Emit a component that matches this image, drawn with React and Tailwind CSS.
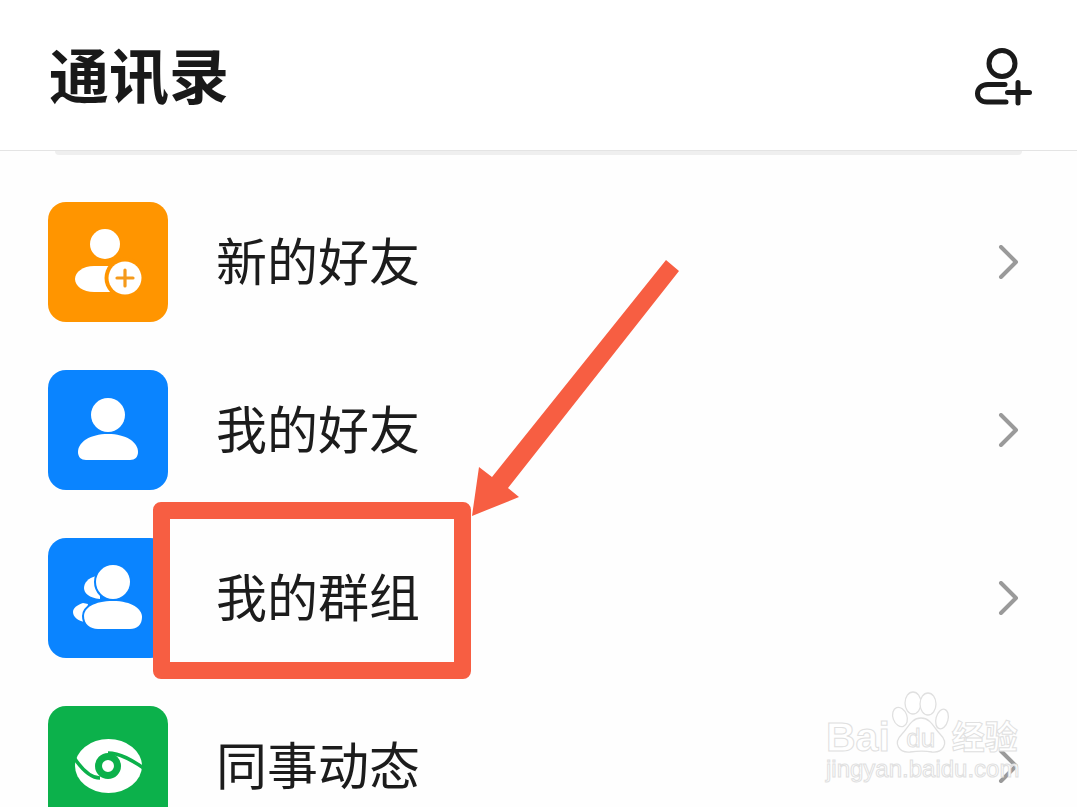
const rows = [
  { label: "新的好友", bg: "bg-[#ff9500]", icon: <NewFriend /> },
  { label: "我的好友", bg: "bg-[#0a84ff]", icon: <Friend /> },
  { label: "我的群组", bg: "bg-[#0a84ff]", icon: <Group /> },
  { label: "同事动态", bg: "bg-[#0cb14b]", icon: <Eye /> },
];

function NewFriend() {
  return (
    <svg viewBox="0 0 120 120" className="w-[120px] h-[120px]">
      <circle cx="57" cy="42" r="15" fill="#fff" />
      <path d="M46 64H76V90H46C35 90 27 84 27 77C27 70 35 64 46 64Z" fill="#fff" />
      <circle cx="77" cy="76" r="20.5" fill="#ff9500" />
      <circle cx="77" cy="76" r="16.5" fill="#fff" />
      <path d="M69 76H85M77 68V84" stroke="#f59a1b" strokeWidth="3.2" strokeLinecap="round" />
    </svg>
  );
}
function Friend() {
  return (
    <svg viewBox="0 0 120 120" className="w-[120px] h-[120px]">
      <circle cx="60" cy="45" r="17" fill="#fff" />
      <path d="M60 64C78 64 90 72 90 82C90 87 87 90 82 90H38C33 90 30 87 30 82C30 72 42 64 60 64Z" fill="#fff" />
    </svg>
  );
}
function Group() {
  return (
    <svg viewBox="0 0 120 120" className="w-[120px] h-[120px]">
      <path d="M48 38C40 40 36 45 36 50C36 55 41 60 52 61L52 38Z" fill="#fff" />
      <path d="M35 65C29 67 25 70 25 74C25 79 30 83 37 84L40 66Z" fill="#fff" />
      <circle cx="65" cy="44" r="17" fill="#fff" stroke="#0a84ff" strokeWidth="4" paintOrder="stroke" />
      <path d="M65 63C84 63 94 71 94 79C94 87 89 91 82 91H50C42 91 36 86 36 78C36 70 46 63 65 63Z" fill="#fff" stroke="#0a84ff" strokeWidth="4" paintOrder="stroke" />
    </svg>
  );
}
function Eye() {
  return (
    <svg viewBox="0 0 120 120" className="w-[120px] h-[120px]">
      <ellipse cx="60.5" cy="60" rx="33.5" ry="27" fill="#fff" />
      <path d="M25 50C34 64 44 72 52 72M60 47C72 47 84 54 97 63" fill="none" stroke="#0cb14b" strokeWidth="3.5" />
      <circle cx="60" cy="60" r="9.5" fill="#fff" stroke="#0cb14b" strokeWidth="7" />
    </svg>
  );
}
function Chevron() {
  return (
    <svg viewBox="0 0 24 34" className="w-6 h-[34px] translate-x-[2px]">
      <path d="M3 2L18 17L3 32" fill="none" stroke="#9a9a9a" strokeWidth="4" strokeLinecap="round" strokeLinejoin="round" />
    </svg>
  );
}

const latin = { fontFamily: '"Liberation Sans", sans-serif' };

export default function App() {
  const font = { fontFamily: '"Noto Sans CJK SC", "Noto Sans", sans-serif' };
  return (
    <div style={font} className="relative w-[1077px] h-[807px] overflow-hidden bg-[#fefefe]">
      <header className="h-[151px] border-b border-[#e4e4e4] flex items-center justify-between pl-[49px] pr-[44px] pb-[6px] bg-white">
        <h1 className="text-[60px] leading-none font-bold text-[#191919] mt-[2px]">通讯录</h1>
        <svg viewBox="0 0 60 60" className="w-[60px] h-[60px] mt-[10px]">
          <circle cx="29" cy="16.5" r="13" fill="none" stroke="#1a1a1a" strokeWidth="5" />
          <path d="M32 37.5H15C8 37.5 4.5 42 4.5 46.5C4.5 51 8 55 14 55H33" fill="none" stroke="#1a1a1a" strokeWidth="5" strokeLinecap="round" />
          <path d="M34.5 45.5H56.5M45 35.5V56" fill="none" stroke="#1a1a1a" strokeWidth="5" strokeLinecap="round" />
        </svg>
      </header>
      <div className="mx-[55px] h-1 rounded-b-xl bg-[#efefef]" />
      <ul className="flex flex-col gap-12 pl-[48px] pr-[57px] pt-[47px]">
        {rows.map((r) => (
          <li key={r.label} className="flex items-center h-[120px]">
            <div className={`w-[120px] h-[120px] rounded-[18px] shrink-0 ${r.bg}`}>{r.icon}</div>
            <span className="ml-[48px] pb-[6px] text-[51px] leading-none text-[#1c1c1c] flex-1">{r.label}</span>
            <Chevron />
          </li>
        ))}
      </ul>

      <div className="absolute left-[153px] top-[502px] w-[318px] h-[177px] border-[17px] border-[#f75e42] rounded-[8px]" />
      <svg className="absolute left-[460px] top-[250px]" width="230" height="280" viewBox="460 250 230 280">
        <path d="M666 260L679 271L508 488L519 497L472 516L479 467L492 477Z" fill="#f75e42" />
      </svg>

      <div className="absolute left-[826px] top-[690px] flex flex-col text-white [-webkit-text-stroke:1px_#e0e0e0]">
        <div className="flex items-end h-[67px]">
          <span className="text-[41px] leading-none font-bold mb-[-1px]" style={latin}>Bai</span>
          <div className="relative w-[62px] h-[67px]">
            <svg width="70" height="67" viewBox="0 0 70 67">
              <g fill="#fff" stroke="#e0e0e0" strokeWidth="1.3">
                <ellipse cx="10" cy="27" rx="7" ry="10" transform="rotate(-20 10 27)" />
                <ellipse cx="23" cy="13" rx="8" ry="11" />
                <ellipse cx="38" cy="14" rx="8" ry="11" />
                <ellipse cx="52" cy="29" rx="6" ry="10" transform="rotate(15 52 29)" />
                <path d="M31 28C41 28 44 38 50 44C60 54 52 63 42 62C36 61 28 61 20 62C10 63 2 54 12 44C18 38 21 28 31 28Z" />
              </g>
            </svg>
            <div className="absolute inset-0 flex items-end justify-center pb-[6px]">
              <span className="text-[26px] leading-none" style={latin}>du</span>
            </div>
          </div>
          <span className="text-[33px] leading-none font-bold mb-[5px]">经验</span>
        </div>
        <span className="text-[24px] leading-none" style={latin}>jingyan.baidu.com</span>
      </div>
    </div>
  );
}
